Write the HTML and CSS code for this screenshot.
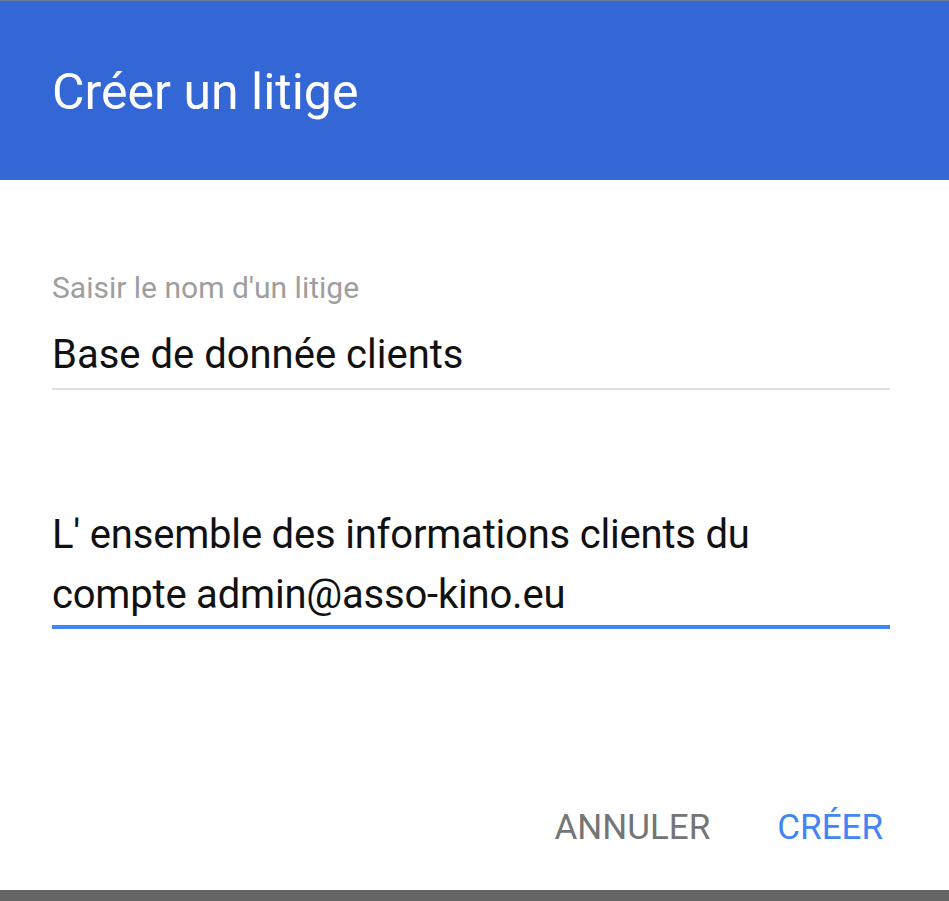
FILE: index.html
```html
<!DOCTYPE html>
<html lang="fr">
  <head>
    <meta charset="UTF-8" />
    <meta name="viewport" content="width=device-width, initial-scale=1.0" />
    <title>Créer un litige</title>
    <link rel="stylesheet" href="styles.css">
  </head>
  <body>
    <div class="dialog">
      <div class="dialog-header">
        <h1>Créer un litige</h1>
      </div>
      <div class="dialog-body">
        <div class="field">
          <label class="field-label">Saisir le nom d'un litige</label>
          <div class="field-input">Base de donnée clients</div>
        </div>
        <div class="field field-area">
          <div class="field-input focused">L' ensemble des informations clients du<br />compte admin@asso-kino.eu</div>
        </div>
      </div>
      <div class="dialog-actions">
        <button class="btn btn-cancel">ANNULER</button>
        <button class="btn btn-primary">CRÉER</button>
      </div>
    </div>
  </body>
</html>
```

FILE: styles.css
```css
body {
  font-family: Roboto, "Noto Sans", Arial, sans-serif;
  background: #656565;
  margin: 0;
  padding: 0;
}
.dialog {
  background: #fff;
  height: 890px;
  border-top: 1px solid #6b7a96;
  box-sizing: border-box;
  display: flex;
  flex-direction: column;
}
.dialog-header {
  background: #3367d6;
  height: 179px;
  padding: 66px 52px 0;
  box-sizing: border-box;
}
h1 {
  margin: 0;
  color: #fff;
  font-size: 50px;
  font-weight: 400;
  line-height: 50px;
}
.dialog-body {
  padding: 93px 59px 0 52px;
}
.field-label {
  display: block;
  color: #9e9e9e;
  font-size: 30px;
  line-height: 30px;
}
.field-input {
  margin-top: 32px;
  padding-bottom: 13px;
  border-bottom: 2px solid #e0e0e0;
  color: #111;
  font-size: 40px;
  line-height: 40px;
}
.field-area .field-input {
  margin-top: 115px;
  padding-bottom: 0;
  line-height: 60px;
  letter-spacing: -0.2px;
}
.field-input.focused {
  border-bottom: 4px solid #4285f4;
}
.dialog-actions {
  margin-top: auto;
  display: flex;
  justify-content: flex-end;
  gap: 67px;
  padding: 0 66px 45px 0;
}
.btn {
  background: none;
  border: none;
  padding: 0;
  font-family: inherit;
  font-size: 35px;
  line-height: 35px;
  cursor: pointer;
}
.btn-cancel {
  color: #757575;
}
.btn-primary {
  color: #4285f4;
}
```
